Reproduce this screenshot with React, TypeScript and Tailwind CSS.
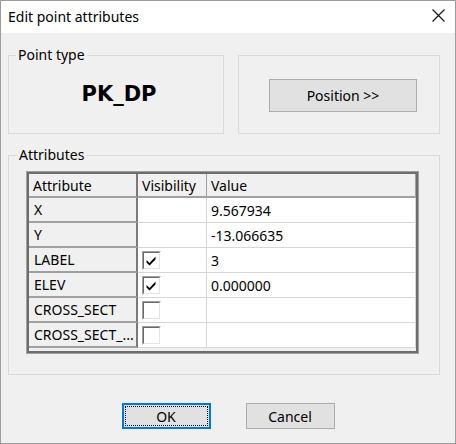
import React from "react";

interface AttrRow {
  name: string;
  visible: boolean | null;
  value: string;
}

const rows: AttrRow[] = [
  { name: "X", visible: null, value: "9.567934" },
  { name: "Y", visible: null, value: "-13.066635" },
  { name: "LABEL", visible: true, value: "3" },
  { name: "ELEV", visible: true, value: "0.000000" },
  { name: "CROSS_SECT", visible: false, value: "" },
  { name: "CROSS_SECT_...", visible: false, value: "" },
];

// Classic sunken 3D checkbox
const CheckBox: React.FC<{ checked: boolean }> = ({ checked }) => (
  <span className="block w-[19px] h-[19px] border border-t-[#a0a0a0] border-l-[#a0a0a0] border-r-white border-b-white">
    <span className="block w-full h-full border border-t-[#696969] border-l-[#696969] border-r-[#e3e3e3] border-b-[#e3e3e3] bg-white">
      {checked && (
        <svg width="15" height="15" viewBox="0 0 15 15" className="block">
          <path d="M2.5 7 L5.5 10 L11.5 3.5 L11.5 6.5 L5.5 12.5 L2.5 9.5 Z" fill="#000" />
        </svg>
      )}
    </span>
  </span>
);

const App: React.FC = () => {
  return (
    <div className="w-[456px] h-[444px] border border-[#9c9c9c] bg-[#f0f0f0] flex flex-col font-['Noto_Sans',sans-serif] text-[14px] text-black">
      {/* Title bar */}
      <div className="h-[32px] shrink-0 bg-white flex items-center justify-between pl-[7px] pr-[10px]">
        <span className="leading-none">Edit point attributes</span>
        <svg width="13" height="13" viewBox="0 0 13 13" className="mb-[3px]">
          <path d="M0.5 0.5 L12.5 12.5 M12.5 0.5 L0.5 12.5" stroke="#111" strokeWidth="1.1" />
        </svg>
      </div>

      <div className="flex flex-col pl-[7px] pt-[22px]">
        {/* Top group boxes */}
        <div className="flex gap-[14px]">
          <div className="relative w-[216px] h-[79px] border border-[#d9d9d9] flex items-center justify-center">
            <span className="absolute -top-[10px] left-[7px] px-[2px] bg-[#f0f0f0] leading-[18px]">
              Point type
            </span>
            <span className="ml-[6px] font-['DejaVu_Sans',sans-serif] font-bold text-[21px] leading-none">
              PK_DP
            </span>
          </div>
          <div className="w-[202px] h-[79px] border border-[#d9d9d9] pl-[30px] pt-[23px]">
            <button className="w-[148px] h-[33px] bg-[#e1e1e1] border border-[#adadad] flex items-center justify-center">
              Position &gt;&gt;
            </button>
          </div>
        </div>

        {/* Attributes group */}
        <div className="relative mt-[21px] w-[432px] h-[220px] border border-[#d9d9d9] pl-[17px] pt-[15px]">
          <span className="absolute -top-[10px] left-[8px] px-[2px] bg-[#f0f0f0] leading-[18px]">
            Attributes
          </span>
          <div className="w-[393px] h-[183px] border border-[#a0a0a0]">
            <div className="w-full h-full border-2 border-[#6d6d6d] bg-[#f0f0f0] grid grid-cols-[109px_69px_1fr] content-start">
              {/* Header */}
              <div className="h-[24px] flex items-center pl-[4px] border-b-2 border-b-[#a0a0a0] border-r-2 border-r-[#7a7a7a]">
                Attribute
              </div>
              <div className="h-[24px] flex items-center pl-[4px] border-b-2 border-b-[#a0a0a0] border-r border-r-[#a0a0a0]">
                Visibility
              </div>
              <div className="h-[24px] flex items-center pl-[4px] border-b-2 border-b-[#a0a0a0] border-r border-r-[#a0a0a0]">
                Value
              </div>

              {rows.map((r) => (
                <React.Fragment key={r.name}>
                  <div className="h-[25px] flex items-center pl-[5px] border-b-2 border-b-[#a0a0a0] border-r-2 border-r-[#7a7a7a]">
                    {r.name}
                  </div>
                  <div className="h-[25px] flex items-center pl-[4px] bg-white border-b border-b-[#d7d7d7] border-r border-r-[#d7d7d7]">
                    {r.visible !== null && <CheckBox checked={r.visible} />}
                  </div>
                  <div className="h-[25px] flex items-center pl-[4px] bg-white border-b border-b-[#d7d7d7] border-r border-r-[#d7d7d7]">
                    {r.value}
                  </div>
                </React.Fragment>
              ))}
            </div>
          </div>
        </div>
      </div>

      {/* Dialog buttons */}
      <div className="flex justify-center gap-[35px] mt-[28px]">
        <button className="w-[89px] h-[26px] bg-[#e1e1e1] border-2 border-[#0078d7] p-[1px]">
          <span className="flex w-full h-full items-center justify-center border border-dotted border-black">
            OK
          </span>
        </button>
        <button className="w-[89px] h-[26px] bg-[#e1e1e1] border border-[#adadad] flex items-center justify-center">
          Cancel
        </button>
      </div>
    </div>
  );
};

export default App;
